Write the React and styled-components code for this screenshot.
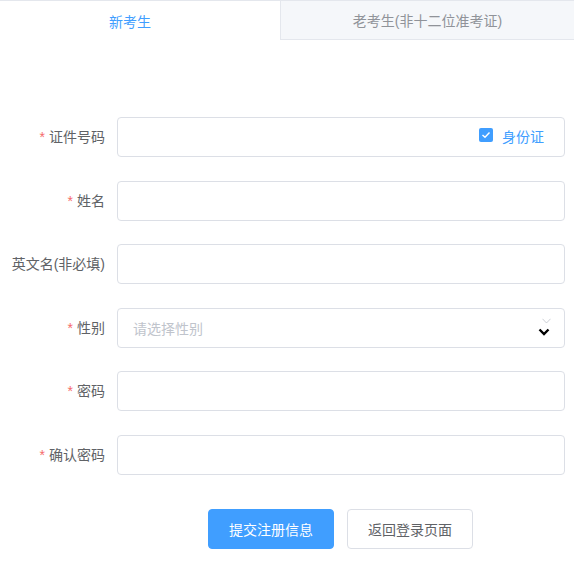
import React, { useState } from 'react';
import styled, { createGlobalStyle } from 'styled-components';

const GlobalStyle = createGlobalStyle`
  html, body {
    margin: 0;
    padding: 0;
    background: #fff;
    font-family: "Liberation Sans", "Noto Sans CJK SC", sans-serif;
  }
  * {
    box-sizing: border-box;
  }
`;

const Page = styled.div`
  width: 574px;
  height: 568px;
  overflow: hidden;
`;

const Tabs = styled.div`
  display: flex;
  height: 40px;
  border-top: 1px solid #e4e7ed;
`;

const Tab = styled.div`
  flex: ${(p) => (p.$first ? '0 0 280px' : '1')};
  display: flex;
  align-items: center;
  justify-content: center;
  padding-right: ${(p) => (p.$first ? '20px' : '0')};
  font-size: 14px;
  color: ${(p) => (p.$active ? '#409eff' : '#909399')};
  background: ${(p) => (p.$active ? '#fff' : '#f5f7fa')};
  border-left: ${(p) => (p.$first ? 'none' : '1px solid #e4e7ed')};
  border-bottom: ${(p) => (p.$active ? 'none' : '1px solid #e4e7ed')};
  cursor: pointer;
`;

const Form = styled.form`
  display: flex;
  flex-direction: column;
  gap: 23.6px;
  padding: 77px 9px 0 0;
`;

const Row = styled.div`
  display: flex;
  align-items: center;
  height: 40px;
`;

const Label = styled.label`
  flex: 0 0 117px;
  padding-right: 12px;
  text-align: right;
  font-size: 14px;
  color: #606266;
  line-height: 40px;
  white-space: nowrap;
`;

const Star = styled.span`
  color: #f56c6c;
  margin-right: 4px;
`;

const Field = styled.div`
  position: relative;
  flex: 1;
  height: 40px;
  display: flex;
  align-items: center;
  border: 1px solid #dcdfe6;
  border-radius: 4px;
  background: #fff;
`;

const Input = styled.input`
  flex: 1;
  height: 100%;
  border: none;
  outline: none;
  background: transparent;
  padding: 0 15px;
  font-size: 14px;
  color: #606266;
  font-family: inherit;

  &::placeholder {
    color: #c0c4cc;
  }
`;

const CheckWrap = styled.label`
  display: flex;
  align-items: center;
  gap: 9px;
  margin-right: 20px;
  font-size: 14px;
  color: #409eff;
  cursor: pointer;
  position: relative;
  top: -1px;
`;

const CheckBox = styled.span`
  width: 14px;
  height: 14px;
  border-radius: 2px;
  background: #409eff;
  display: flex;
  align-items: center;
  justify-content: center;
  position: relative;
  top: -1px;
`;

const Placeholder = styled.span`
  flex: 1;
  padding-left: 15px;
  font-size: 14px;
  color: #c0c4cc;
`;

const Arrows = styled.span`
  display: flex;
  flex-direction: column;
  align-items: center;
  gap: 4px;
  margin-right: 13px;
  margin-top: -1px;

  svg:first-child {
    margin-left: 5px;
  }
`;

const Actions = styled.div`
  display: flex;
  justify-content: center;
  gap: 13px;
  padding-left: 116px;
  margin-top: 10px;
`;

const Button = styled.button`
  width: 126px;
  height: 40px;
  border-radius: 4px;
  font-size: 14px;
  font-family: inherit;
  cursor: pointer;
  border: 1px solid ${(p) => (p.$primary ? '#409eff' : '#dcdfe6')};
  background: ${(p) => (p.$primary ? '#409eff' : '#fff')};
  color: ${(p) => (p.$primary ? '#fff' : '#606266')};
`;

const fields = [
  { key: 'id', label: '证件号码', required: true, idCard: true },
  { key: 'name', label: '姓名', required: true },
  { key: 'en', label: '英文名(非必填)' },
  { key: 'sex', label: '性别', required: true, select: true },
  { key: 'pwd', label: '密码', required: true, type: 'password' },
  { key: 'pwd2', label: '确认密码', required: true, type: 'password' },
];

const App = () => {
  const [tab, setTab] = useState(0);

  return (
    <Page>
      <GlobalStyle />
      <Tabs>
        <Tab $first $active={tab === 0} onClick={() => setTab(0)}>新考生</Tab>
        <Tab $active={tab === 1} onClick={() => setTab(1)}>老考生(非十二位准考证)</Tab>
      </Tabs>

      <Form onSubmit={(e) => e.preventDefault()}>
        {fields.map((f) => (
          <Row key={f.key}>
            <Label>
              {f.required && <Star>*</Star>}
              {f.label}
            </Label>
            <Field>
              {f.select ? (
                <>
                  <Placeholder>请选择性别</Placeholder>
                  <Arrows>
                    <svg width="9" height="6" viewBox="0 0 9 6">
                      <path d="M0.5 0.8 L4.5 5 L8.5 0.8" fill="none" stroke="#c0c4cc" strokeWidth="0.8" />
                    </svg>
                    <svg width="12" height="8" viewBox="0 0 12 8">
                      <path d="M1.5 1.5 L6 6 L10.5 1.5" fill="none" stroke="#000" strokeWidth="2.4" />
                    </svg>
                  </Arrows>
                </>
              ) : (
                <Input type={f.type || 'text'} />
              )}
              {f.idCard && (
                <CheckWrap>
                  <CheckBox>
                    <svg width="10" height="8" viewBox="0 0 10 8">
                      <path d="M1.5 4 L4 6.3 L8.5 1.5" fill="none" stroke="#fff" strokeWidth="1.4" />
                    </svg>
                  </CheckBox>
                  身份证
                </CheckWrap>
              )}
            </Field>
          </Row>
        ))}
        <Actions>
          <Button $primary type="submit">提交注册信息</Button>
          <Button type="button">返回登录页面</Button>
        </Actions>
      </Form>
    </Page>
  );
};

export default App;
